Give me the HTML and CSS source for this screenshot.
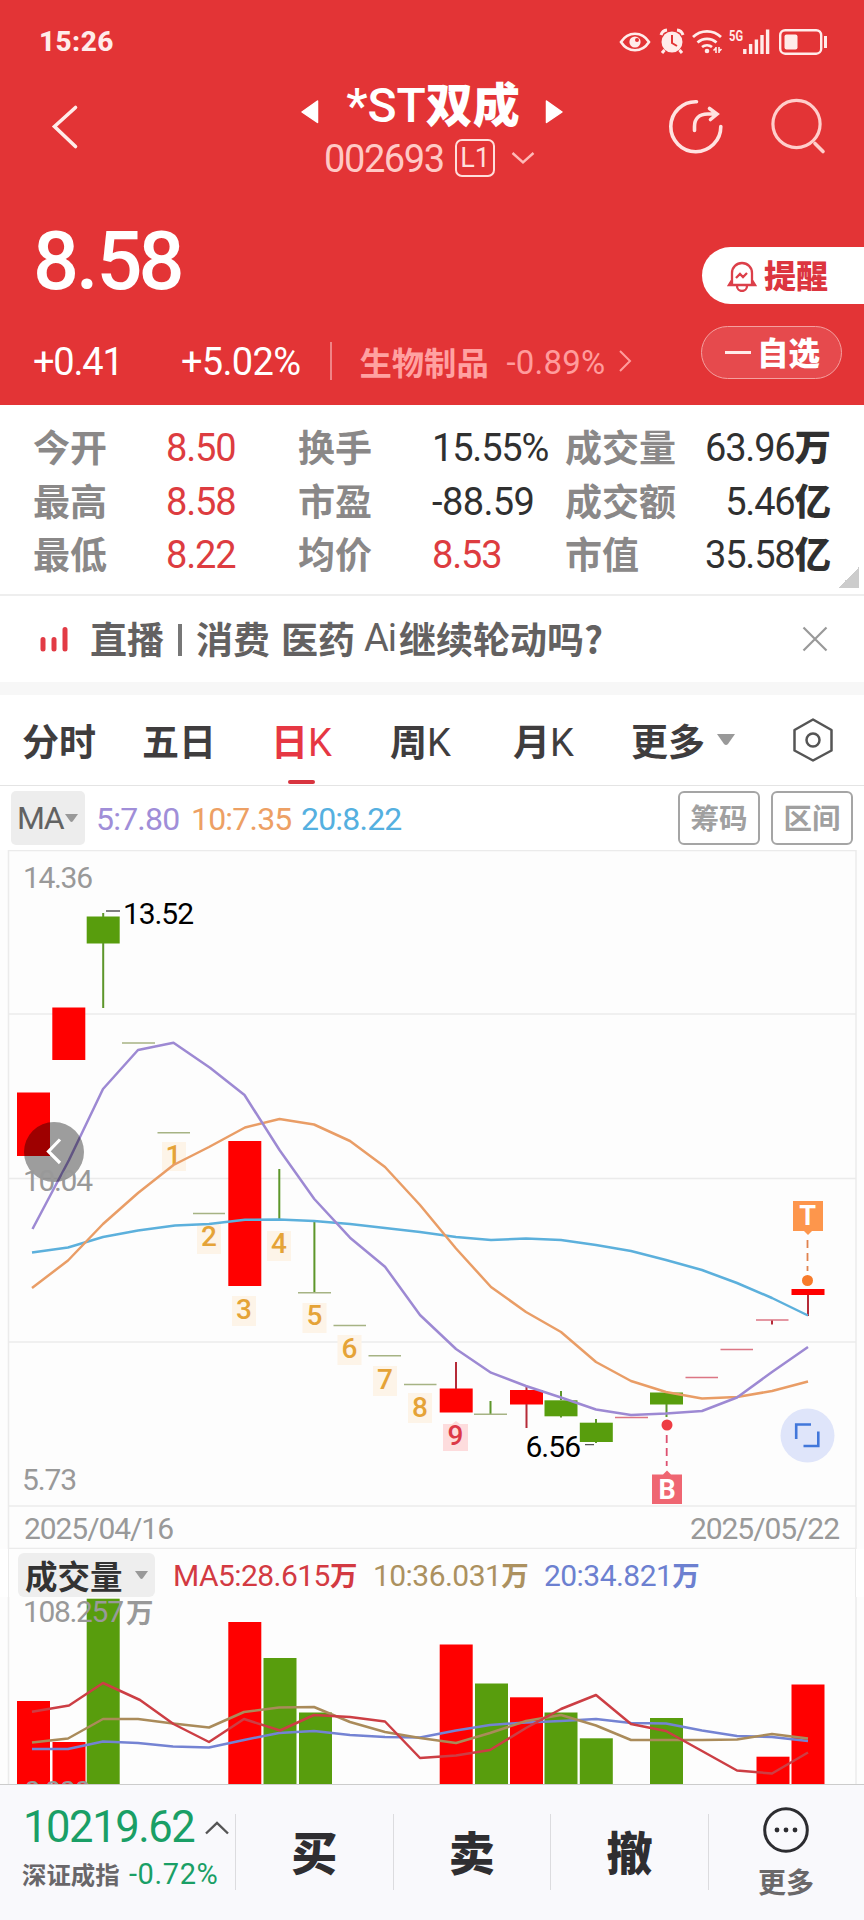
FILE: index.html
```html
<!DOCTYPE html>
<html lang="zh-CN">
<head>
<meta charset="utf-8">
<title>*ST双成 002693</title>
<link rel="stylesheet" href="styles.css">
</head>
<body>
<div class="app">
  <header class="top">
    <div class="status">
      <span class="clock">15:26</span>
      <svg class="status-icons" width="216" height="32" viewBox="616 26 216 32" fill="none" stroke="#ffecea">
        <path d="M621 42c7-11 21-11 28 0c-7 11-21 11-28 0z" stroke-width="2.6"/>
        <circle cx="635" cy="42" r="5.6" fill="#ffecea" stroke="none"/><circle cx="637" cy="40" r="2" fill="#e33436" stroke="none"/>
        <circle cx="672" cy="42" r="10.5" fill="#ffecea" stroke="none"/>
        <path d="M661 35a7 7 0 0 1 6-5M683 35a7 7 0 0 0-6-5M664.500 50l-2.500 3M679.500 50l2.500 3" stroke-width="3"/>
        <path d="M672 35v8l5 3" stroke="#e33436" stroke-width="2"/>
        <path d="M693 37a20 20 0 0 1 28 0M697.500 42.500a14 14 0 0 1 19 0M702 47a8 8 0 0 1 10 0" stroke-width="2.700"/>
        <circle cx="707" cy="51" r="2.300" fill="#ffecea" stroke="none"/>
        <path d="M716 47v6M713.500 50.500l2.500-2.500M719 47v6M721.500 49l-2.500 2.500" stroke-width="1.600"/>
        <text class="net" x="729" y="41" textLength="14" lengthAdjust="spacingAndGlyphs">5G</text>
        <path d="M744.800 49v5M750.600 44v10M756.400 39.500v14.500M762 35v19M767.600 29.500v24.500" stroke-width="3.400"/>
        <rect x="780.200" y="30.200" width="41" height="23.500" rx="5" stroke-width="2.400"/>
        <rect x="784.500" y="34.500" width="13" height="15" rx="2" fill="#ffecea" stroke="none"/>
        <path d="M825.500 36v12" stroke-width="3"/>
      </svg>
    </div>
    <div class="titlebar">
      <svg class="back" width="30" height="48" viewBox="50 102 30 48" fill="none" stroke="#ffecea" stroke-width="3.600" stroke-linecap="round"><path d="M75.500 107.500L54.500 126.500L75.500 146.500"/></svg>
      <div class="heading">
        <div class="name-row">
          <svg width="20" height="26" viewBox="0 0 20 26"><path d="M17.500 2v21.500L2 13z" fill="#fff" stroke="#fff" stroke-width="1.500" stroke-linejoin="round"/></svg>
          <span class="stock-name"><span class="latin">*ST</span>双成</span>
          <svg width="20" height="26" viewBox="0 0 20 26"><path d="M2.500 2v21.500L18 13z" fill="#fff" stroke="#fff" stroke-width="1.500" stroke-linejoin="round"/></svg>
        </div>
        <div class="code-row">
          <span class="code">002693</span><span class="level">L1</span>
          <svg width="24" height="14" viewBox="0 0 24 14" fill="none" stroke="#ffb9b7" stroke-width="2.400"><path d="M1.500 2L12 11.500L22.500 2"/></svg>
        </div>
      </div>
      <svg class="tools" width="160" height="60" viewBox="668 98 160 60" fill="none" stroke="#ffe3e1" stroke-width="3.600" stroke-linecap="round">
        <path d="M696.500 101.700A25 25 0 1 0 720.800 126.500"/>
        <path d="M694.500 130.500v-4c0-8 5-12.500 13-12.500h8M709.500 108.500l7.500 5.500l-6.500 5.500"/>
        <circle cx="796.500" cy="124" r="23.600" stroke="#ffcecb" stroke-width="3.200"/><path d="M815 143.500l8 8" stroke="#ffcecb" stroke-width="3.600"/>
      </svg>
    </div>
    <div class="quote">
      <div class="quote-left">
        <div class="price">8<i>.</i>58</div>
        <div class="change">
          <span class="delta">+0.41</span><span class="percent">+5.02%</span>
          <span class="rule"></span>
          <span class="industry">生物制品</span><span class="ind-change">-0.89%</span>
          <svg width="14" height="24" viewBox="0 0 14 24" fill="none" stroke="#ff9c9c" stroke-width="2"><path d="M2 2L12 12L2 22"/></svg>
        </div>
      </div>
      <div class="quote-right">
        <div class="alert">
          <svg width="30" height="32" viewBox="0 0 30 32" fill="none" stroke="#dc3f49" stroke-width="2.300"><path d="M5 25V13a10 10 0 0 1 20 0v12M5 20l-3 5h26l-3-5M10 26a5 5 0 0 0 10 0M9 18l4-4l3 3l4-4"/></svg>
          <span>提醒</span>
        </div>
        <div class="watch"><i class="minus"></i><span>自选</span></div>
      </div>
    </div>
  </header>

  <section class="stats">
    <span class="k">今开</span><span class="v up">8.50</span><span class="k">换手</span><span class="v">15.55%</span><span class="k">成交量</span><span class="v r">63.96<b>万</b></span>
    <span class="k">最高</span><span class="v up">8.58</span><span class="k">市盈</span><span class="v wide">-88.59</span><span class="k">成交额</span><span class="v r">5.46<b>亿</b></span>
    <span class="k">最低</span><span class="v up">8.22</span><span class="k">均价</span><span class="v up">8.53</span><span class="k">市值</span><span class="v r">35.58<b>亿</b></span>
    <i class="corner"></i>
  </section>

  <section class="live">
    <svg width="30" height="28" viewBox="0 0 30 28" stroke="#e23b45" stroke-width="5" stroke-linecap="round"><path d="M4 14.500v9.500M15 14.500v9.500M26 4.500v19.500"/></svg>
    <p class="live-text">直播<i class="bar"></i>消费<i class="gap"></i>医药<i class="gap"></i><span class="ai">Ai</span>继续轮动吗?</p>
    <svg class="close" width="26" height="26" viewBox="0 0 26 26" stroke="#999" stroke-width="2.200"><path d="M1.500 1.500l23 23M24.500 1.500l-23 23"/></svg>
  </section>

  <nav class="tabs">
    <span class="t1">分时</span><span class="t2">五日</span><span class="t3 active">日<em>K</em></span><span class="t4">周<em>K</em></span><span class="t5">月<em>K</em></span><span class="t6">更多</span>
    <svg class="tri" width="20" height="12" viewBox="0 0 20 12"><path d="M1 0h18l-7 10q-2 2-4 0z" fill="#999"/></svg>
    <svg class="hex" width="42" height="46" viewBox="792 718 42 46" fill="none" stroke="#555" stroke-width="2.500" stroke-linejoin="round"><path d="M813 720.500L831.500 731v20.500L813 761.500L794.500 751.500V731z"/><circle cx="813" cy="741" r="6.500"/></svg>
  </nav>

  <div class="ma-row">
    <span class="ma-btn">MA<svg width="13" height="9" viewBox="0 0 13 9"><path d="M0 0h13l-5 7q-1.500 2-3 0z" fill="#999"/></svg></span>
    <span class="ma m5">5:7.80</span><span class="ma m10">10:7.35</span><span class="ma m20">20:8.22</span>
    <span class="outline first">筹码</span><span class="outline">区间</span>
  </div>

  <svg class="chart" width="864" height="699" viewBox="0 850 864 699">
    <g class="grid"><path d="M8.500 850V1549M856 850V1549M8 850.500H856M8 1014H856M8 1178.500H856M8 1342H856M8 1506H856M8 1548.500H856"/></g>
    <g class="up">
      <rect x="17" y="1092.500" width="33" height="63.500"/><rect x="52.300" y="1007.500" width="33" height="52.500"/>
      <rect x="228.300" y="1141" width="33" height="145"/><rect x="439.700" y="1388.500" width="33" height="24"/>
      <rect x="510" y="1390" width="33" height="14.500"/><rect x="791.500" y="1289" width="33" height="6"/>
    </g>
    <g class="down">
      <rect x="86.700" y="916.500" width="33" height="27"/><rect x="544.500" y="1400.300" width="33" height="16"/>
      <rect x="579.800" y="1422.700" width="33" height="19.300"/><rect x="650" y="1392.500" width="33" height="12"/>
    </g>
    <g fill="none" stroke-width="2">
      <path d="M103.200 913v4M103.200 943V1008M279.300 1169v52M314.400 1221v72M490.500 1401v14M561 1391v9M561 1416v1.500M596 1419v4M596 1442v1M666.500 1404v13" stroke="#5d962a"/>
      <path d="M456 1362v27M526.500 1387v3M526.500 1404v24M772 1320v4.500M808 1295v21" stroke="#b52b38"/>
      <path d="M122 1043h33M157.500 1132.700h32.500M193 1213.500h32M298 1292.700h33M333.500 1325.500h32.500M368.500 1355.700h32.500M404 1384.500h32.500M474 1414.300h33" stroke="#a6b384" stroke-width="1.600"/>
      <path d="M615 1417.500h33M685.500 1377.500h32.500M720.500 1349.500h32.500M756 1320h32.500" stroke="#dc7684" stroke-width="1.600"/>
      <path d="M106 911h14M585 1444.700h9" stroke="#555" stroke-width="1.300"/>
    </g>
    <g class="tags">
      <rect x="162" y="1142" width="24" height="29"/><rect x="197" y="1224" width="24" height="30"/><rect x="232" y="1296" width="24" height="30"/><rect x="267" y="1231" width="24" height="30"/><rect x="302.500" y="1303" width="24" height="30"/><rect x="337.500" y="1335" width="24" height="30"/><rect x="373" y="1366" width="24" height="30"/><rect x="408" y="1393" width="24" height="30"/>
    </g>
    <path d="M443 1424h9l4-3l4 3h8v27h-25z" fill="#fddcdd"/>
    <g class="nums">
      <text x="173.500" y="1165">1</text><text x="209" y="1246">2</text><text x="244" y="1318.500">3</text><text x="279" y="1253">4</text><text x="314.500" y="1325">5</text><text x="349.500" y="1358">6</text><text x="385" y="1388.500">7</text><text x="420" y="1417">8</text><text class="nine" x="455.500" y="1445">9</text>
    </g>
    <g class="line">
      <polyline stroke="#5cb0dc" points="32,1252.500 68,1247.500 103,1237 138,1230.500 175,1225.500 209,1224 245,1219.700 279,1219.500 314,1221 350,1224 385,1228 420,1232 456,1237 491,1240 526,1238.500 561,1240 596,1245 631,1251 666,1260 702,1270 737,1283 772,1298 808,1315.500"/>
      <polyline stroke="#e99d66" points="32,1288 68,1260.500 103,1224 138,1193 173.500,1165 209,1147 245,1127.500 279.500,1119 314,1124.500 350,1141 385,1167 420,1205 456,1248.500 491,1287 526,1312 561,1332 596,1362 631,1381 666,1392 702,1398.500 737,1397 772,1391 808,1381.500"/>
      <polyline stroke="#9d89d3" points="32.500,1229 69,1160 103,1089 138,1050 173.500,1042.700 210,1067.700 244.500,1095 279.500,1150 314.300,1199 350,1237.700 385,1266.700 420,1315 456,1349 491,1372.700 526,1386 561,1397.500 596,1409.500 631,1415 666,1413.500 702,1411 737,1397.500 772,1372 808,1347"/>
    </g>
    <circle cx="54" cy="1152" r="30" fill="#000" fill-opacity=".38"/>
    <path d="M60 1139.500L48.500 1151.500L60 1163" fill="none" stroke="#fff" stroke-width="3.200"/>
    <g class="axis">
      <text x="23" y="888" textLength="70">14.36</text><text x="23" y="1191" textLength="70">10.04</text><text x="22" y="1489.500" textLength="55">5.73</text>
      <text x="24" y="1538.500" textLength="150">2025/04/16</text><text x="690" y="1538.500" textLength="150">2025/05/22</text>
      <g fill="#000"><text x="123" y="924" textLength="71">13.52</text><text x="525.500" y="1457" textLength="55.500">6.56</text></g>
    </g>
    <path d="M793 1201h30v30h-11l-4 4l-4-4h-11z" fill="#fd964c"/>
    <path d="M807.500 1240v31" stroke="#e0824e" stroke-width="1.800" stroke-dasharray="8 5"/><circle cx="807.500" cy="1280.500" r="5.500" fill="#f77b2b"/>
    <path d="M652 1504v-29.500h11l4-4l4 4h11v29.500z" fill="#ef6672"/>
    <path d="M666.700 1435v31" stroke="#dd5070" stroke-width="1.800" stroke-dasharray="8 5"/><circle cx="667" cy="1425" r="5.500" fill="#ee3c43"/>
    <g class="flag"><text x="807.700" y="1225">T</text><text x="667" y="1498.500">B</text></g>
    <circle cx="807.500" cy="1435.500" r="27" fill="#dfe5fa"/>
    <path d="M796.200 1439v-14.500H811M803.500 1446h14.800V1431.500" fill="none" stroke="#4277da" stroke-width="2.600"/>
  </svg>

  <section class="volume">
    <div class="vol-head">
      <span class="vol-btn">成交量<svg width="13" height="9" viewBox="0 0 13 9"><path d="M0 0h13l-5 7q-1.500 2-3 0z" fill="#999"/></svg></span>
      <span class="vm v5">MA5:28.615<b>万</b></span><span class="vm v10">10:36.031<b>万</b></span><span class="vm v20">20:34.821<b>万</b></span>
    </div>
    <svg class="chart" width="864" height="187" viewBox="0 1597 864 187">
      <g class="grid"><path d="M8.500 1597V1784M856 1597V1784"/></g>
      <g class="up"><rect x="17" y="1701" width="33" height="83"/><rect x="52.500" y="1742" width="33" height="42"/><rect x="228.300" y="1622" width="33" height="162"/><rect x="439.700" y="1644.500" width="33" height="140"/><rect x="510" y="1697.300" width="33" height="87"/><rect x="756.500" y="1756.700" width="33" height="28"/><rect x="791.500" y="1684.500" width="33" height="100"/></g>
      <g class="down"><rect x="86.700" y="1598.700" width="33" height="186"/><rect x="263.500" y="1658" width="33" height="126"/><rect x="299" y="1712.500" width="33" height="72"/><rect x="475" y="1683.500" width="33" height="101"/><rect x="544.500" y="1712.500" width="33" height="72"/><rect x="579.800" y="1738.300" width="33" height="46"/><rect x="650" y="1718" width="33" height="66"/></g>
      <g class="line">
        <polyline stroke="#7483d3" points="32,1749 68,1749 103,1741.500 138,1743 173,1746.500 209,1747.500 244,1740 279,1733 314,1731 350,1735 385,1737 420,1737.500 456,1730.500 490,1725 526,1722.500 561,1721 596,1719 631,1723 666,1723.500 702,1730.500 737,1736 772,1737 808,1741"/>
        <polyline stroke="#aa8b5a" points="32,1742.500 68,1738.500 103,1719 138,1719 173,1723.500 209,1727.500 244,1712 279,1707.500 314,1707 350,1722 385,1732 420,1738 456,1743 490,1733 526,1721 561,1715 596,1725.500 631,1740 666,1740 702,1740 737,1739.500 772,1734 808,1738.500"/>
        <polyline stroke="#cc3e44" points="32,1711.700 69,1705.500 103,1683 140,1700 173.500,1724 209,1742 244,1719 280,1730.500 314,1715 350,1717 385,1721.500 420,1758 456,1755.500 490,1750 526,1728 561,1709 596,1695 631,1724 666,1731 702,1751 737,1770.500 772,1773.500 808,1752.500"/>
      </g>
      <g class="axis"><text x="23" y="1622" textLength="101">108.257</text><text class="cjk" x="126" y="1622.500">万</text><text x="24" y="1802" textLength="67">0.000</text></g>
    </svg>
  </section>

  <footer class="dock">
    <div class="index">
      <div class="index-top"><span class="index-value">10219.62</span><svg width="24" height="14" viewBox="0 0 24 14" fill="none" stroke="#555" stroke-width="2.400"><path d="M1 12.500L12 2L23 12.500"/></svg></div>
      <div class="index-sub"><span class="index-name">深证成指</span><span class="index-pct">-0.72%</span></div>
    </div>
    <div class="act">买</div><div class="act">卖</div><div class="act">撤</div>
    <div class="more">
      <svg width="48" height="48" viewBox="0 0 48 48"><circle cx="24" cy="24" r="21.300" fill="none" stroke="#2c2c30" stroke-width="3"/><g fill="#2c2c30"><circle cx="15" cy="24" r="2.400"/><circle cx="24" cy="24" r="2.400"/><circle cx="33" cy="24" r="2.400"/></g></svg>
      <span>更多</span>
    </div>
  </footer>
</div>
</body>
</html>
```
FILE: styles.css
```css
* { box-sizing: border-box; }
body { margin: 0; background: #fff; font-family: "Noto Sans CJK SC", sans-serif; }
svg { display: block; flex: none; }
i, em { font-style: normal; }
.app { width: 864px; height: 1920px; overflow: hidden; background: #fff; white-space: nowrap; }

.clock, .latin, .code, .level, .price, .delta, .percent, .ind-change, .v, .ai, .tabs em,
.ma-btn, .ma, .vm, .index-value, .index-pct, .axis, .nums, .flag { font-family: Roboto, sans-serif; font-weight: 450; }

/* header */
.top { height: 405px; background: #e33436; color: #fff; }
.status { height: 68px; display: flex; justify-content: space-between; padding: 26px 32px 0 39px; }
.clock { font-size: 28px; font-weight: 800; line-height: 32px; letter-spacing: .4px; color: #ffecea; }
.net { font: 700 15px Roboto, sans-serif; fill: #ffecea; stroke: none; }
.titlebar { height: 132px; display: flex; }
.back { margin: 34px 0 0 50px; }
.heading { width: 264px; margin-left: 220px; }
.name-row { height: 74px; display: flex; align-items: center; justify-content: space-between; padding-top: 14px; }
.stock-name { font-size: 47px; font-weight: 800; line-height: 60px; margin: -16px 0 0 2px; }
.latin { font-size: 48px; font-weight: 500; }
.code-row { height: 38px; display: flex; align-items: center; margin: -3px 0 0 24px; }
.code { width: 131px; font-size: 38px; line-height: 38px; letter-spacing: -1.4px; color: #ffc9c5; padding-top: 2px; }
.level { width: 40px; height: 38px; border: 2px solid #ffdedb; border-radius: 7px; font-size: 27px; line-height: 34px; text-align: center; color: #ffdedb; margin-right: 16px; }
.tools { margin: 30px 0 0 104px; }
.quote { height: 205px; display: flex; justify-content: space-between; }
.price { margin: 13px 0 0 33px; height: 98px; font-size: 81px; font-weight: 500; line-height: 98px; letter-spacing: -4px; }
.price i { margin: 0 2px 0 1px; }
.change { height: 46px; margin: 28px 0 0 33px; display: flex; align-items: center; }
.delta { width: 148px; font-size: 38px; letter-spacing: -1.2px; }
.percent { width: 149px; font-size: 38px; letter-spacing: -.7px; }
.rule { width: 1.5px; height: 38px; background: #f08486; margin-right: 28px; margin-top: -2px; }
.industry { width: 147px; font-size: 32.300px; font-weight: 700; line-height: 46px; color: #ffa1a1; margin-top: -3px; }
.ind-change { width: 111px; font-size: 33px; letter-spacing: .2px; color: #ff9c9c; }
.change svg { margin-top: -2px; }
.quote-right { width: 163px; padding-top: 47px; }
.alert { margin-left: 1px; height: 57px; display: flex; align-items: center; padding-left: 25px; background: #fff; border-radius: 29px 0 0 29px; color: #dc353f; font-size: 32px; font-weight: 900; }
.alert span { margin: -3px 0 0 7px; }
.watch { width: 141px; height: 53px; margin-top: 22px; display: flex; align-items: center; border: 1.5px solid #f4a09f; border-radius: 27px; background: #e64a4d; font-size: 31.500px; font-weight: 900; padding-left: 23px; }
.minus { width: 26px; height: 3px; background: #ffecea; }
.watch span { margin: -4px 0 0 6px; }

/* key figures */
.stats { position: relative; height: 191px; display: grid; grid-template-columns: 132px 133px 133px 134px 1fr auto; grid-auto-rows: 53.600px; padding: 16px 33px 0; border-bottom: 2px solid #eee; }
.k { font-size: 37px; font-weight: 700; line-height: 50px; color: #8a8888; }
.v { font-size: 38px; line-height: 54px; letter-spacing: -1.200px; color: #303030; padding-left: 1px; }
.v.wide { letter-spacing: -.6px; }
.v b { font: 900 36.500px/50px "Noto Sans CJK SC", sans-serif; letter-spacing: 0; }
.up { color: #dd3c40; }
.r { text-align: right; }
.corner { position: absolute; right: 5px; bottom: 6px; width: 21px; height: 21px; background: linear-gradient(135deg, transparent 50%, #ccc 50%); }

/* live banner */
.live { height: 99px; border-bottom: 13px solid #f7f7f7; display: flex; align-items: center; padding: 0 36px 0 39px; color: #636161; }
.live-text { flex: 1; margin: -2px 0 0 21px; display: flex; align-items: center; font-size: 37px; font-weight: 700; line-height: 56px; }
.bar { width: 4px; height: 32px; margin: 3px 14px 0; background: #777; }
.gap { width: 11px; }
.ai { letter-spacing: -1px; width: 33px; margin-left: -2px; margin-right: 2px; font-size: 38px; line-height: 58px; }

/* period tabs */
.tabs { height: 91px; border-bottom: 1.500px solid #e4e4e4; display: flex; align-items: center; padding-left: 22px; font-size: 37px; font-weight: 700; color: #3f3d3e; }
.tabs span { line-height: 91px; height: 91px; position: relative; }
.tabs em { font-size: 38px; }
.t1 { width: 120px; } .t2 { width: 129px; } .t3 { width: 119px; } .t4 { width: 123px; } .t5 { width: 118px; } .t6 { width: 85px; }
.tabs .active { color: #e63743; }
.active::after { content: ""; position: absolute; left: 17px; bottom: 2px; width: 27px; height: 4px; border-radius: 2px; background: #d8343f; }
.hex { margin-left: 56px; }

/* moving averages */
.ma-row { height: 64px; display: flex; align-items: center; padding: 0 11px 0 11px; }
.ma-btn { width: 74px; height: 54px; margin-right: 11px; padding-left: 6px; display: flex; align-items: center; background: #ededed; border-radius: 5px; color: #626262; font-size: 32px; letter-spacing: -1.500px; }
.ma-btn svg { margin-left: 2px; }
.ma { font-size: 32px; letter-spacing: -.8px; margin-right: 11px; padding-top: 1px; }
.m5 { color: #a08ed8; width: 84px; } .m10 { color: #eda064; width: 99px; } .m20 { color: #55b0e0; }
.outline { width: 82px; height: 54px; border: 2px solid #a5a5a5; border-radius: 6px; color: #a0a0a0; font-size: 28.500px; font-weight: 700; line-height: 48px; text-align: center; margin-left: 11px; }
.outline.first { margin-left: auto; }

/* charts */
.chart { background: #fdfdfd; }
.grid path { fill: none; stroke: #ebebeb; stroke-width: 1.500; }
.chart .up { fill: #f00; }
.down { fill: #589d0d; }
.tags { fill: #fdf4e8; }
.nums { fill: #e5a337; font-size: 28px; font-weight: 500; text-anchor: middle; }
.nine { fill: #dc3848; }
.line { fill: none; stroke-width: 2.500; stroke-linejoin: round; }
.axis { fill: #999; font-size: 30px; }
.cjk { font: 700 27.500px "Noto Sans CJK SC", sans-serif; }
.flag { fill: #fff; font-size: 27px; font-weight: 700; text-anchor: middle; }
.vol-head { height: 48px; padding: 4px 0 0 18px; display: flex; align-items: center; background: linear-gradient(90deg, transparent 8px, #ebebeb 8px, #ebebeb 9px, #fdfdfd 9px, #fdfdfd 855px, #ebebeb 855px, #ebebeb 856px, transparent 856px); }
.vol-btn { width: 137px; height: 44px; display: flex; align-items: center; background: #eee; border-radius: 6px; padding-left: 7px; font-size: 32.500px; font-weight: 700; line-height: 40px; color: #333; }
.vol-btn svg { margin-left: 12px; }
.vm { font-size: 30px; line-height: 44px; letter-spacing: -.55px; height: 44px; margin-top: 1px; }
.vm b { font: 700 27.500px/40px "Noto Sans CJK SC", sans-serif; letter-spacing: 0; }
.v5 { width: 200px; margin-left: 18px; color: #d33a42; } .v10 { width: 171px; color: #ac915f; } .v20 { color: #6c80d0; }

/* bottom dock */
.dock { height: 136px; border-top: 1.500px solid #ccc; background: #f9f9fc; display: grid; grid-template-columns: 235px 157.500px 157.500px 158px 1fr; }
.index { padding-top: 17px; }
.index-top { height: 52px; display: flex; align-items: center; padding-left: 23px; }
.index-value { width: 182px; font-size: 43.500px; line-height: 52px; color: #1a9f66; letter-spacing: -1.4px; }
.index-sub { height: 40px; margin-top: 0; display: flex; align-items: center; padding-left: 22px; }
.index-name { width: 107px; font-size: 24.400px; font-weight: 700; line-height: 36px; color: #69676a; }
.index-pct { font-size: 29px; color: #1a9f66; letter-spacing: .6px; }
.act { height: 76px; margin-top: 29px; border-left: 1.500px solid #dcdcdf; font-size: 46px; font-weight: 900; line-height: 73px; text-align: center; color: #2f2e31; }
.more { height: 76px; margin-top: 29px; border-left: 1.500px solid #dcdcdf; display: flex; flex-direction: column; align-items: center; font-size: 28px; font-weight: 700; line-height: 40px; color: #6a686a; }
.more svg { margin: -8px 0 0 -1px; }
.more span { margin: 7px 0 0 -1px; }
```
